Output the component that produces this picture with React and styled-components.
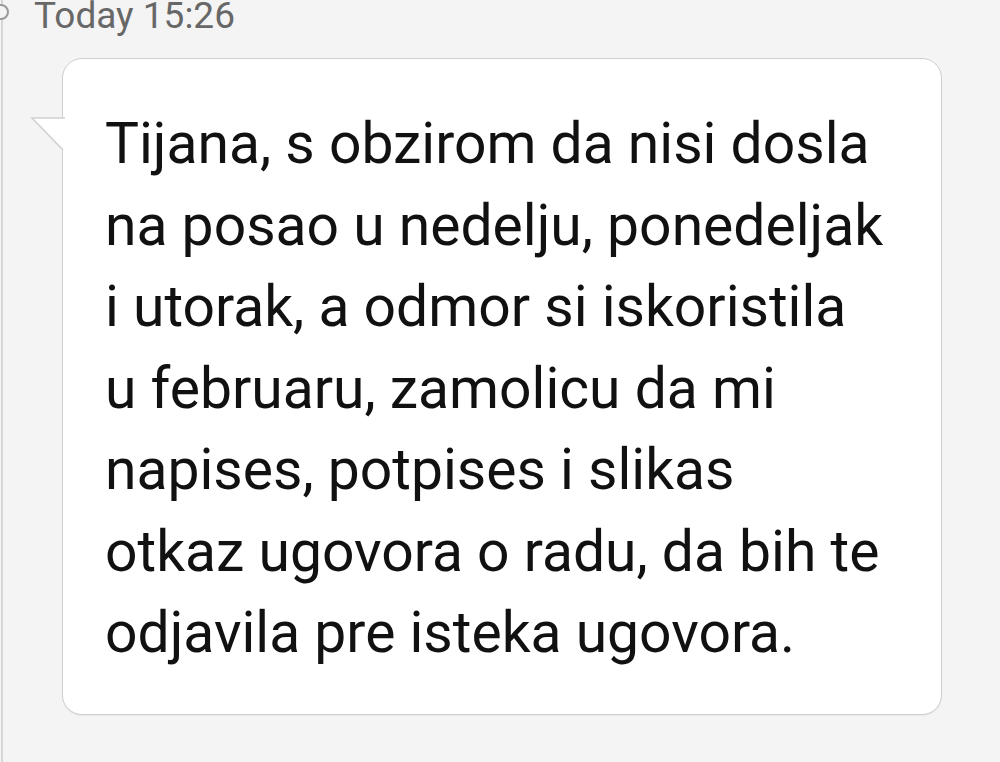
import React from "react";
import styled, { createGlobalStyle } from "styled-components";

const Global = createGlobalStyle`
  html, body {
    margin: 0;
    padding: 0;
    background: #f4f4f4;
  }
  body {
    font-family: Roboto, "Noto Sans", "Liberation Sans", sans-serif;
  }
`;

const Screen = styled.div`
  width: 1000px;
  height: 762px;
  display: flex;
  overflow: hidden;
  background: #f4f4f4;
`;

const Rail = styled.div`
  position: relative;
  width: 2px;
  margin-left: 1px;
  background: #d6d6d6;
`;

const RailDot = styled.div`
  position: absolute;
  top: 4px;
  left: -8px;
  width: 12px;
  height: 12px;
  border: 2px solid #9a9a9a;
  border-radius: 50%;
  background: #f4f4f4;
`;

const Thread = styled.div`
  flex: 1;
  display: flex;
  flex-direction: column;
`;

const Stamp = styled.div`
  margin: -4px 0 0 31px;
  height: 40px;
  font-size: 37px;
  line-height: 40px;
  color: #676767;
  white-space: nowrap;
`;

const Bubble = styled.div`
  position: relative;
  margin: 22px 0 0 59px;
  width: 880px;
  box-sizing: border-box;
  padding: 44px 16px 40px 42px;
  background: #fff;
  border: 1.5px solid #cfcfcf;
  border-radius: 20px;
  box-shadow: 0 1px 1px rgba(0, 0, 0, 0.05);
`;

const Tail = styled.svg`
  position: absolute;
  left: -31px;
  top: 58px;
  width: 34px;
  height: 36px;
  overflow: visible;
`;

const Message = styled.p`
  margin: 0;
  font-size: 57px;
  line-height: 81.5px;
  color: #111;
  white-space: pre-line;
`;

const lines = [
  "Tijana, s obzirom da nisi dosla",
  "na posao u nedelju, ponedeljak",
  "i utorak, a odmor si iskoristila",
  "u februaru, zamolicu da mi",
  "napises, potpises i slikas",
  "otkaz ugovora o radu, da bih te",
  "odjavila pre isteka ugovora.",
];

const App = () => {
  return (
    <>
      <Global />
      <Screen>
        <Rail>
          <RailDot />
        </Rail>
        <Thread>
          <Stamp>Today 15:26</Stamp>
          <Bubble>
            <Tail viewBox="0 0 34 36">
              <polygon points="0,1 33,1 33,34" fill="#fff" />
              <polyline
                points="33,1 0,1 31,33"
                fill="none"
                stroke="#cfcfcf"
                strokeWidth="1.5"
              />
            </Tail>
            <Message>{lines.join("\n")}</Message>
          </Bubble>
        </Thread>
      </Screen>
    </>
  );
};

export default App;
